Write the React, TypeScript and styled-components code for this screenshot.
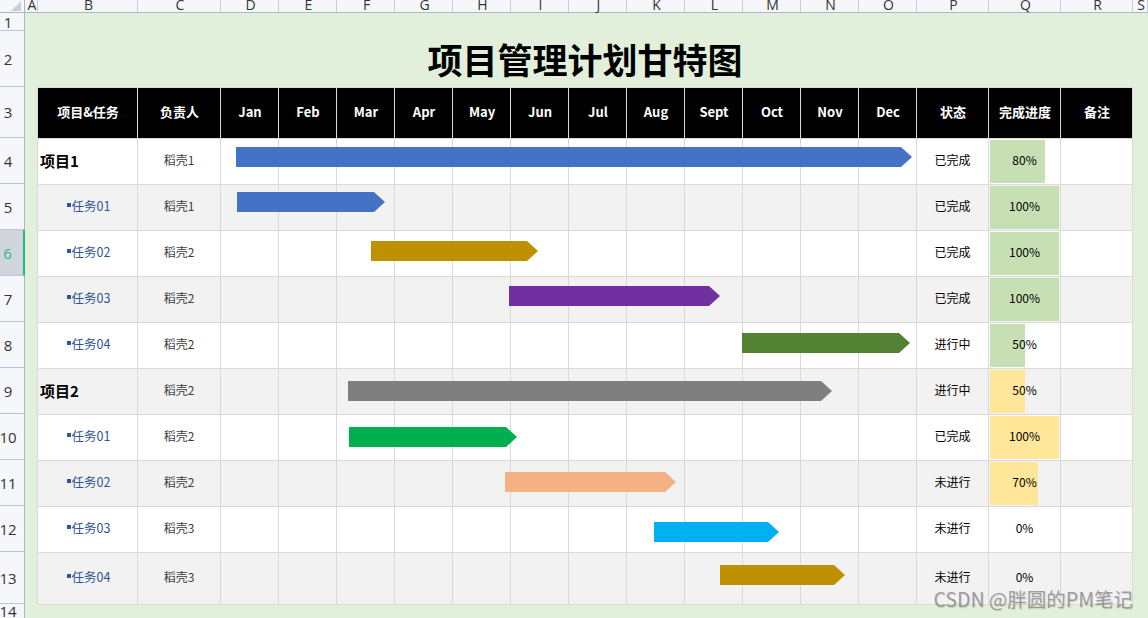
import styled, { createGlobalStyle } from "styled-components";

const COLUMNS = ["B", "C", "D", "E", "F", "G", "H", "I", "J", "K", "L", "M", "N", "O", "P", "Q", "R"];
const MONTHS = ["Jan", "Feb", "Mar", "Apr", "May", "Jun", "Jul", "Aug", "Sept", "Oct", "Nov", "Dec"];
const TRACKS = "100px 83px repeat(12, 58px) repeat(3, 72px)";

const GREEN = "#c6e0b4";
const YELLOW = "#ffe699";

type Task = {
  name: string;
  project?: boolean;
  owner: string;
  status: string;
  progress: number;
  barColor: string;
  barFrom: number;
  barTo: number;
  barTop: number;
  fill?: string;
};

// bar positions are page x values read off the chart
const TASKS: Task[] = [
  { name: "项目1", project: true, owner: "稻壳1", status: "已完成", progress: 80, barColor: "#4472c4", barFrom: 236, barTo: 912, barTop: 8, fill: GREEN },
  { name: "任务01", owner: "稻壳1", status: "已完成", progress: 100, barColor: "#4472c4", barFrom: 237, barTo: 385, barTop: 7, fill: GREEN },
  { name: "任务02", owner: "稻壳2", status: "已完成", progress: 100, barColor: "#bf9000", barFrom: 371, barTo: 538, barTop: 10, fill: GREEN },
  { name: "任务03", owner: "稻壳2", status: "已完成", progress: 100, barColor: "#7030a0", barFrom: 509, barTo: 720, barTop: 9, fill: GREEN },
  { name: "任务04", owner: "稻壳2", status: "进行中", progress: 50, barColor: "#548235", barFrom: 742, barTo: 910, barTop: 10, fill: GREEN },
  { name: "项目2", project: true, owner: "稻壳2", status: "进行中", progress: 50, barColor: "#7f7f7f", barFrom: 348, barTo: 832, barTop: 12, fill: YELLOW },
  { name: "任务01", owner: "稻壳2", status: "已完成", progress: 100, barColor: "#00b050", barFrom: 349, barTo: 517, barTop: 12, fill: YELLOW },
  { name: "任务02", owner: "稻壳2", status: "未进行", progress: 70, barColor: "#f4b183", barFrom: 505, barTo: 676, barTop: 11, fill: YELLOW },
  { name: "任务03", owner: "稻壳3", status: "未进行", progress: 0, barColor: "#00b0f0", barFrom: 654, barTo: 779, barTop: 15 },
  { name: "任务04", owner: "稻壳3", status: "未进行", progress: 0, barColor: "#bf9000", barFrom: 720, barTo: 845, barTop: 12 },
];

const ROW_NUMBERS = [
  { n: 1, h: 18 },
  { n: 2, h: 56 },
  { n: 3, h: 51 },
  ...Array.from({ length: 9 }, (_, i) => ({ n: i + 4, h: 46 })),
  { n: 13, h: 52 },
  { n: 14, h: 14 },
];

const GlobalStyle = createGlobalStyle`
  html, body {
    margin: 0;
    padding: 0;
    overflow: hidden;
  }
  * {
    box-sizing: border-box;
  }
`;

const Sheet = styled.div`
  position: relative;
  width: 1148px;
  height: 618px;
  overflow: hidden;
  background: #e2efda;
  font-family: "Noto Sans CJK SC", "Noto Sans", sans-serif;
`;

const ColumnBar = styled.div`
  display: grid;
  grid-template-columns: 25px 13px ${TRACKS} 15px;
  height: 13px;
  background: #f5f7fb;
  border-bottom: 1px solid #aab5d1;
`;

const ColumnLabel = styled.div`
  display: flex;
  justify-content: center;
  align-items: flex-start;
  height: 12px;
  padding-left: 2px;
  border-right: 1px solid #c6cde0;
  font-family: "Open Sans", sans-serif;
  font-size: 14px;
  line-height: 9px;
  color: #333;
`;

const Corner = styled.div`
  position: relative;
  height: 12px;
  border-right: 1px solid #aab5d1;
  &::after {
    content: "";
    position: absolute;
    right: 3px;
    bottom: 1px;
    border-style: solid;
    border-width: 0 0 10px 10px;
    border-color: transparent transparent #c9ced6 transparent;
  }
`;

const Body = styled.div`
  display: flex;
`;

const RowGutter = styled.div`
  display: flex;
  flex-direction: column;
  flex: 0 0 25px;
  min-width: 0;
  background: #f5f7fb;
  border-right: 1px solid #aab5d1;
`;

const RowNumber = styled.div<{ $height: number; $selected?: boolean }>`
  display: flex;
  justify-content: center;
  align-items: center;
  flex: 0 0 ${(p) => p.$height}px;
  padding: 1px 8px 0 0;
  margin-right: ${(p) => (p.$selected ? "-1px" : "0")};
  border-bottom: 1px solid #bcc5dc;
  border-right: ${(p) => (p.$selected ? "2px solid #21b77d" : "none")};
  background: ${(p) => (p.$selected ? "#d0d4dc" : "transparent")};
  font-family: "Open Sans", sans-serif;
  font-size: 15px;
  line-height: 13px;
  color: ${(p) => (p.$selected ? "#2fb98a" : "#333")};
`;

const Canvas = styled.div`
  flex: 1;
  min-width: 0;
  padding: 18px 15px 0 12px;
`;

const Title = styled.h1`
  height: 56px;
  margin: 0;
  padding-bottom: 2px;
  display: flex;
  justify-content: center;
  align-items: center;
  font-size: 35px;
  font-weight: 700;
  line-height: 1;
  color: #000;
`;

const Table = styled.div`
  border-top: 1px solid #d9d9d9;
  border-left: 1px solid #d9d9d9;
`;

const HeaderRow = styled.div`
  display: grid;
  grid-template-columns: ${TRACKS};
  height: 51px;
`;

const HeaderCell = styled.div`
  display: flex;
  justify-content: center;
  align-items: center;
  padding: 0 0 3px 1px;
  background: #000;
  border-right: 1px solid #d9d9d9;
  border-bottom: 1px solid #d9d9d9;
  font-size: 13px;
  font-weight: 700;
  color: #fff;
`;

const Row = styled.div<{ $band: boolean; $last: boolean }>`
  position: relative;
  display: grid;
  grid-template-columns: ${TRACKS};
  height: ${(p) => (p.$last ? 52 : 46)}px;
  background: ${(p) => (p.$band ? "#f2f2f2" : "#fff")};
`;

const Cell = styled.div`
  position: relative;
  display: flex;
  justify-content: center;
  align-items: center;
  padding-bottom: 5px;
  border-right: 1px solid #d9d9d9;
  border-bottom: 1px solid #d9d9d9;
  font-size: 12px;
  color: #000;
`;

const ProjectName = styled(Cell)`
  justify-content: flex-start;
  padding-left: 2px;
  padding-bottom: 2px;
  font-size: 15px;
  font-weight: 700;
`;

const TaskName = styled(Cell)`
  padding-left: 2px;
  font-size: 12.5px;
  color: #2f5597;
  &::before {
    content: "";
    width: 4px;
    height: 4px;
    margin-right: 1px;
    background: #2f5597;
  }
`;

const OwnerCell = styled(Cell)`
  color: #404040;
`;

const ProgressFill = styled.div<{ $color: string }>`
  position: absolute;
  top: 1px;
  left: 1px;
  bottom: 1px;
  background: ${(p) => p.$color};
`;

const ProgressText = styled.span`
  position: relative;
`;

const Bar = styled.div<{ $color: string }>`
  position: absolute;
  height: 20px;
  background: ${(p) => p.$color};
  clip-path: polygon(0 0, calc(100% - 11px) 0, 100% 50%, calc(100% - 11px) 100%, 0 100%);
`;

const Watermark = styled.div`
  position: absolute;
  right: 15px;
  bottom: 7px;
  font-size: 19.5px;
  line-height: 24px;
  color: rgba(105, 105, 105, 0.6);
  text-shadow: 1px 1px 1px rgba(0, 0, 0, 0.12);
  white-space: nowrap;
`;

export default function App() {
  return (
    <>
      <GlobalStyle />
      <Sheet>
        <ColumnBar>
          <Corner />
          <ColumnLabel>A</ColumnLabel>
          {COLUMNS.map((c) => (
            <ColumnLabel key={c}>{c}</ColumnLabel>
          ))}
          <ColumnLabel>S</ColumnLabel>
        </ColumnBar>
        <Body>
          <RowGutter>
            {ROW_NUMBERS.map((r) => (
              <RowNumber key={r.n} $height={r.h} $selected={r.n === 6}>
                {r.n}
              </RowNumber>
            ))}
          </RowGutter>
          <Canvas>
            <Title>项目管理计划甘特图</Title>
            <Table>
              <HeaderRow>
                <HeaderCell>项目&amp;任务</HeaderCell>
                <HeaderCell>负责人</HeaderCell>
                {MONTHS.map((m) => (
                  <HeaderCell key={m}>{m}</HeaderCell>
                ))}
                <HeaderCell>状态</HeaderCell>
                <HeaderCell>完成进度</HeaderCell>
                <HeaderCell>备注</HeaderCell>
              </HeaderRow>
              {TASKS.map((t, i) => (
                <Row key={i} $band={i % 2 === 1} $last={i === TASKS.length - 1}>
                  {t.project ? <ProjectName>{t.name}</ProjectName> : <TaskName>{t.name}</TaskName>}
                  <OwnerCell>{t.owner}</OwnerCell>
                  {MONTHS.map((m) => (
                    <Cell key={m} />
                  ))}
                  <Cell>{t.status}</Cell>
                  <Cell>
                    {t.fill && <ProgressFill $color={t.fill} style={{ width: `${t.progress * 0.69}px` }} />}
                    <ProgressText>{t.progress}%</ProgressText>
                  </Cell>
                  <Cell />
                  <Bar
                    $color={t.barColor}
                    style={{ left: t.barFrom - 38, width: t.barTo - t.barFrom, top: t.barTop }}
                  />
                </Row>
              ))}
            </Table>
          </Canvas>
        </Body>
        <Watermark>CSDN @胖圆的PM笔记</Watermark>
      </Sheet>
    </>
  );
}
